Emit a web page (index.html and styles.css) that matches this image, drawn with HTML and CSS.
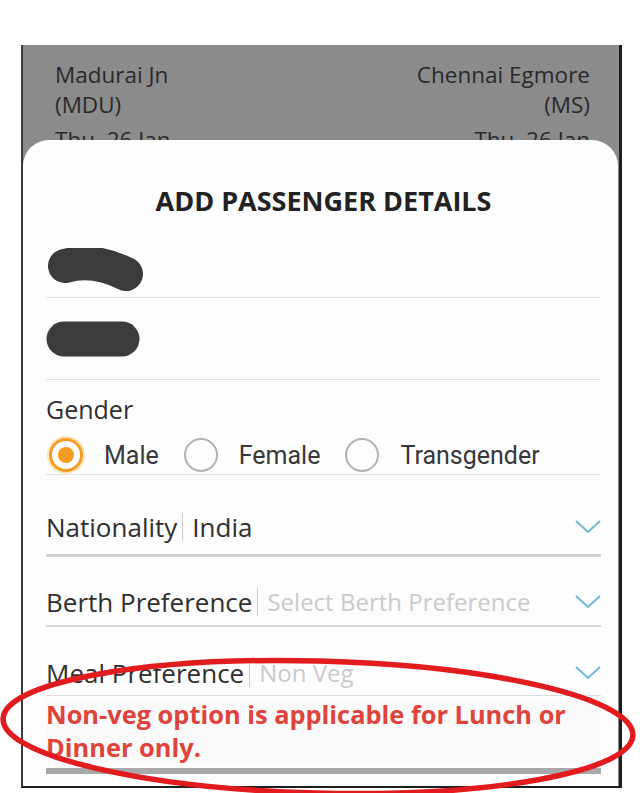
FILE: index.html
```html
<!DOCTYPE html>
<html lang="en">
<head>
    <meta charset="UTF-8">
    <meta name="viewport" content="width=device-width, initial-scale=1.0">
    <title>Add Passenger Details</title>
    <link rel="stylesheet" href="styles.css">
</head>
<body>
    <div class="frame">
        <div class="route">
            <div class="station">
                <div>Madurai Jn</div>
                <div>(MDU)</div>
                <div class="date">Thu, 26 Jan</div>
            </div>
            <div class="station right">
                <div>Chennai Egmore</div>
                <div>(MS)</div>
                <div class="date">Thu, 26 Jan</div>
            </div>
        </div>

        <div class="sheet">
            <h1>ADD PASSENGER DETAILS</h1>

            <div class="field name-one">
                <svg class="blob" width="104" height="46" viewBox="0 0 104 46">
                    <path d="M19 18 Q 48 10 80 26" stroke="#3b3b3b" stroke-width="34" stroke-linecap="round" fill="none"/>
                </svg>
            </div>
            <div class="field name-two">
                <svg class="blob" width="98" height="38" viewBox="0 0 98 38">
                    <path d="M18 19 L 76 19" stroke="#3b3b3b" stroke-width="35" stroke-linecap="round" fill="none"/>
                </svg>
            </div>

            <div class="gender">
                <div class="label">Gender</div>
                <div class="radios">
                    <span class="radio on"></span><span class="opt">Male</span>
                    <span class="radio"></span><span class="opt">Female</span>
                    <span class="radio"></span><span class="opt">Transgender</span>
                </div>
            </div>

            <div class="select nationality">
                <span class="label">Nationality</span>
                <span class="sep"></span>
                <span class="value">India</span>
                <svg class="chevron" width="26" height="14" viewBox="0 0 26 14"><path d="M1 1 L13 12 L25 1" stroke="#6cb9d8" stroke-width="2" fill="none"/></svg>
            </div>
            <div class="select berth">
                <span class="label">Berth Preference</span>
                <span class="sep"></span>
                <span class="value muted">Select Berth Preference</span>
                <svg class="chevron" width="26" height="14" viewBox="0 0 26 14"><path d="M1 1 L13 12 L25 1" stroke="#6cb9d8" stroke-width="2" fill="none"/></svg>
            </div>
            <div class="select meal">
                <span class="label">Meal Preference</span>
                <span class="sep"></span>
                <span class="value muted">Non Veg</span>
                <svg class="chevron" width="26" height="14" viewBox="0 0 26 14"><path d="M1 1 L13 12 L25 1" stroke="#6cb9d8" stroke-width="2" fill="none"/></svg>
            </div>

            <p class="note">Non-veg option is applicable for Lunch or Dinner only.</p>
            <div class="bar"></div>
        </div>
    </div>

    <svg class="circle-mark" width="640" height="793" viewBox="0 0 640 793">
        <ellipse cx="318" cy="727" rx="315" ry="66" transform="rotate(1.5 318 727)" stroke="#e21b1e" stroke-width="5.5" fill="none"/>
    </svg>
</body>
</html>
```

FILE: styles.css
```css
* {
    box-sizing: border-box;
    margin: 0;
    padding: 0;
}

body {
    background-color: #fff;
    font-family: "Open Sans", "Liberation Sans", sans-serif;
    color: #2f2f2f;
    width: 640px;
    height: 793px;
    overflow: hidden;
}

.frame {
    margin: 45px 0 0 21px;
    width: 601px;
    height: 743px;
    background-color: #8b8b8b;
    border-left: 2px solid #3a3a3a;
    border-right: 3px solid #1e1e1e;
    border-bottom: 2px solid #1e1e1e;
    overflow: hidden;
}

.route {
    height: 95px;
    overflow: hidden;
    display: flex;
    justify-content: space-between;
    padding: 15px 29px 0 32px;
    font-size: 22.5px;
    line-height: 30px;
    color: #2a2a2a;
}

.station.right {
    text-align: right;
}

.station .date {
    margin-top: 5px;
}

.sheet {
    background-color: #fdfdfd;
    border-radius: 26px 26px 0 0;
    margin-right: 1px;
    height: 648px;
    padding: 0 17px 0 23px;
}

h1 {
    font-size: 27px;
    font-weight: 700;
    color: #222;
    text-align: center;
    line-height: 30px;
    padding-top: 46px;
}

.field {
    border-bottom: 1px solid #e2e2e2;
    display: flex;
    align-items: flex-start;
}

.name-one {
    height: 82px;
    padding-top: 32px;
}

.name-two {
    height: 82px;
    padding-top: 22px;
}

.blob {
    display: block;
}

.gender {
    padding-top: 14px;
    border-bottom: 1px solid #e2e2e2;
    padding-bottom: 2px;
}

.label {
    font-size: 25px;
    font-weight: 500;
    line-height: 30px;
    color: #2f2f2f;
}

.radios {
    display: flex;
    align-items: center;
    margin-top: 14px;
    height: 34px;
    font-family: Roboto, "Open Sans", sans-serif;
    font-size: 25px;
    color: #383838;
}

.radio {
    width: 34px;
    height: 34px;
    border-radius: 50%;
    border: 2px solid #b3b3b3;
    position: relative;
    flex-shrink: 0;
}

.radio:first-child {
    margin-left: 3px;
}

.radio.on {
    border: 3px solid #f39c1f;
    box-shadow: 0 0 0 2px #fbe3c0;
}

.radio.on::after {
    content: "";
    position: absolute;
    left: 6px;
    top: 6px;
    width: 16px;
    height: 16px;
    border-radius: 50%;
    background-color: #f39c1f;
}

.opt {
    margin: 0 25px 0 21px;
}

.select {
    display: flex;
    align-items: center;
    font-size: 26px;
    line-height: 30px;
}

.select .label {
    font-size: 26px;
}

.select .chevron {
    margin-left: auto;
}

.nationality {
    padding: 37px 0 12px;
    border-bottom: 3px solid #cecece;
}

.berth {
    padding: 30px 0 8px;
    border-bottom: 2px solid #d8d8d8;
}

.meal {
    padding: 31px 0 7px;
    border-bottom: 1px solid #dedede;
}

.sep {
    width: 1px;
    height: 28px;
    background-color: #cfcfcf;
    margin: 0 9px 0 5px;
}

.value {
    font-weight: 500;
    color: #2f2f2f;
}

.value.muted {
    font-size: 24px;
    font-weight: 400;
    color: #cacaca;
}

.note {
    margin-top: 2px;
    padding-right: 20px;
    font-size: 25.4px;
    font-weight: 700;
    line-height: 33px;
    color: #e0433b;
    background-color: #fafafa;
}

.bar {
    margin-top: 4px;
    height: 6px;
    background-color: #a9a9a9;
}

.circle-mark {
    position: absolute;
    left: 0;
    top: 0;
    pointer-events: none;
}
```
